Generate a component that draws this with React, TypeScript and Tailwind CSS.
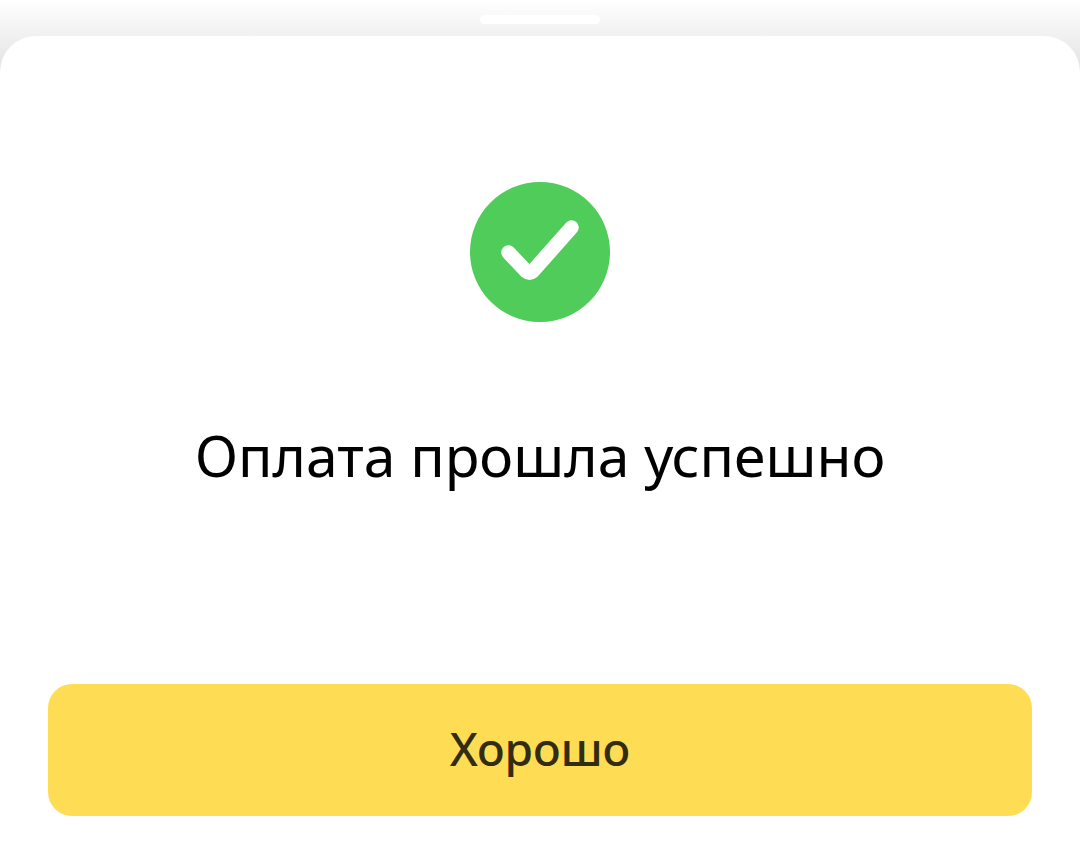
export default function App() {
  return (
    <div className="flex min-h-screen flex-col bg-white font-['Noto_Sans','Open_Sans',sans-serif]">
      <div className="-mb-9 flex h-[72px] justify-center bg-linear-to-b from-white to-[#e2e2e2] pt-[15px]">
        <div className="h-[9px] w-[120px] rounded-full bg-white" />
      </div>
      <main className="flex flex-1 flex-col items-center rounded-t-[36px] bg-white px-12 pt-[146px] pb-12">
        <svg className="size-[140px]" viewBox="0 0 140 140" fill="none" aria-hidden="true">
          <circle cx="70" cy="70" r="70" fill="#50cc5a" />
          <path d="M38.500 70.500 L56.500 89.500 Q59.500 92 62.500 89.500 L101.500 45.500" stroke="white" strokeWidth="14.500" strokeLinecap="round" strokeLinejoin="round" />
        </svg>
        <h1 className="mt-24 text-center text-[57px] leading-[74px] text-black">Оплата прошла успешно</h1>
        <button type="button" className="mt-auto h-[132px] w-full rounded-3xl bg-[#fedd55] pb-1 text-[46px] font-medium text-[#332c11]">
          Хорошо
        </button>
      </main>
    </div>
  );
}
